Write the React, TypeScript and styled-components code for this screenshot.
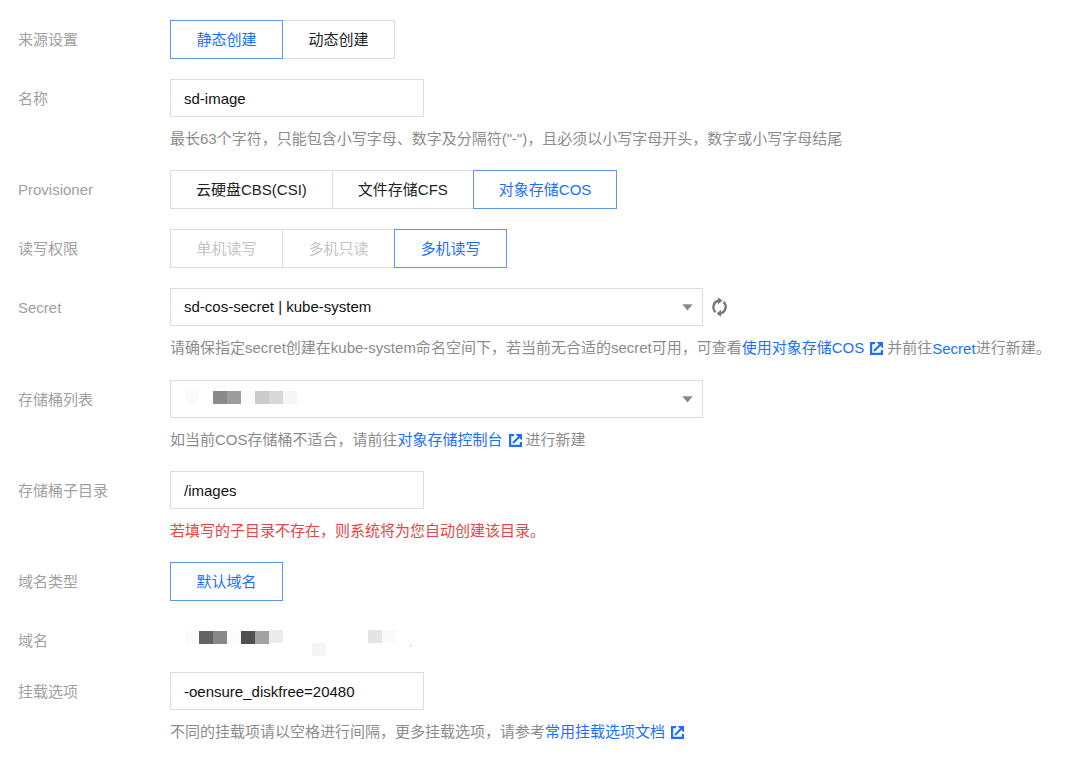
import React from 'react';
import styled, { createGlobalStyle } from 'styled-components';

const GlobalStyle = createGlobalStyle`
  *, *::before, *::after { box-sizing: border-box; }
  body {
    margin: 0;
    background: #fff;
    color: #111;
  }
  body, button, input, select {
    font-family: "Liberation Sans", "Noto Sans CJK SC", sans-serif;
    font-size: 15px;
    line-height: 20px;
  }
`;

const Form = styled.form`
  display: flex;
  flex-direction: column;
  gap: 21px;
  padding: 20px 16px 36px 18px;
`;

const Row = styled.div`
  display: grid;
  grid-template-columns: 152px minmax(0, 1fr);
`;

const Label = styled.label`
  padding-top: 10px;
  color: #a0a0a0;
`;

const Hint = styled.p<{ $error?: boolean }>`
  margin: 0;
  padding-top: 12px;
  color: ${(p) => (p.$error ? '#e54545' : '#8c8c8c')};
`;

const Segments = styled.div`
  display: flex;
`;

const Segment = styled.button<{ $active?: boolean }>`
  position: relative;
  z-index: ${(p) => (p.$active ? 1 : 0)};
  height: 39px;
  min-width: 113px;
  margin: 0 0 -1px;
  padding: 0 25px;
  border: 1px solid ${(p) => (p.$active ? '#5c97ea' : '#ddd')};
  background: #fff;
  color: ${(p) => (p.$active ? '#1a6fff' : '#222')};
  cursor: pointer;

  & + & { margin-left: -1px; }

  &:disabled {
    color: #c4c4c4;
    cursor: not-allowed;
  }
`;

const TextInput = styled.input`
  display: block;
  width: 254px;
  max-width: 100%;
  height: 38px;
  padding: 0 13px;
  border: 1px solid #ddd;
  border-radius: 0;
  background: #fff;
  color: #111;
`;

const SelectLine = styled.div`
  display: flex;
  align-items: center;
  gap: 8px;
`;

const SelectBox = styled.div`
  position: relative;
  flex: 0 1 533px;
`;

const Select = styled.select`
  display: block;
  width: 100%;
  height: 38px;
  padding: 0 32px 0 13px;
  border: 1px solid #ddd;
  border-radius: 0;
  appearance: none;
  background: #fff;
  color: #111;
`;

const Caret = styled.svg`
  position: absolute;
  top: 16px;
  right: 10px;
  pointer-events: none;
`;

const MaskOverlay = styled.div`
  position: absolute;
  top: 10px;
  left: 14px;
  display: flex;
  pointer-events: none;
`;

const IconButton = styled.button`
  display: flex;
  padding: 0;
  border: 0;
  background: none;
  color: #777;
  cursor: pointer;
`;

const Link = styled.a`
  color: #1a6fff;
  text-decoration: none;
`;

const ResourceLink = styled(Link)`
  display: inline-block;
  vertical-align: middle;
`;

const ExternalSvg = styled.svg`
  margin: 0 4px 0 6px;
  vertical-align: -2px;
`;

const DomainValue = styled.div`
  height: 30px;
  padding: 8px 0 0 14px;
  line-height: 0;
`;

const ExternalIcon = () => (
  <ExternalSvg width="13" height="13" viewBox="0 0 13 13" fill="none" stroke="#1a6fff" strokeWidth="2.2" aria-hidden="true">
    <path d="M5 1.1H1.1V11.9H11.9V8" />
    <path d="M4 9L10 3" />
    <path d="M6.4 0H13V6.6Z" fill="#1a6fff" stroke="none" />
  </ExternalSvg>
);

const CaretIcon = () => (
  <Caret width="11" height="7" viewBox="0 0 11 7" aria-hidden="true">
    <path d="M0.3 0.2H10.7L5.5 6.6Z" fill="#888" />
  </Caret>
);

const RefreshIcon = () => (
  <svg width="17" height="20" viewBox="0 0 17 20" fill="none" aria-hidden="true">
    <path d="M4.6 15.2A6.7 6.7 0 0 1 7.4 3.7" stroke="currentColor" strokeWidth="2.3" />
    <path d="M12.4 4.8A6.7 6.7 0 0 1 9.6 16.3" stroke="currentColor" strokeWidth="2.3" />
    <path d="M7 0.3L11.4 3.6L7 7.2Z" fill="currentColor" />
    <path d="M10 12.8L5.6 16.4L10 19.7Z" fill="currentColor" />
  </svg>
);

type Block = { x: number; y: number; fill: string };

const bucketBlocks: Block[] = [
  { x: 1, y: 1, fill: '#fafafa' },
  { x: 29, y: 1, fill: '#8a8a8a' },
  { x: 43, y: 1, fill: '#9d9d9d' },
  { x: 57, y: 1, fill: '#fafafa' },
  { x: 71, y: 1, fill: '#cbcbcb' },
  { x: 85, y: 1, fill: '#d8d8d8' },
  { x: 99, y: 1, fill: '#f6f6f6' },
];

const domainBlocks: Block[] = [
  { x: 1, y: 2, fill: '#fbfbfb' },
  { x: 15, y: 2, fill: '#636363' },
  { x: 29, y: 2, fill: '#888' },
  { x: 43, y: 2, fill: '#fbfbfb' },
  { x: 57, y: 2, fill: '#505050' },
  { x: 71, y: 2, fill: '#a2a2a2' },
  { x: 85, y: 1, fill: '#ebebeb' },
  { x: 128, y: 14, fill: '#f5f5f5' },
  { x: 184, y: 1, fill: '#e4e4e4' },
  { x: 198, y: 1, fill: '#fafafa' },
];

const Mosaic = ({ blocks, width, height }: { blocks: Block[]; width: number; height: number }) => (
  <svg width={width} height={height} viewBox={`0 0 ${width} ${height}`} aria-hidden="true">
    {blocks.map((b) => (
      <rect key={b.x} x={b.x} y={b.y} width="14" height="13" fill={b.fill} />
    ))}
    {width > 200 && <rect x="226" y="16" width="2" height="1" fill="#ccc" />}
  </svg>
);

type Option = { text: string; active?: boolean; disabled?: boolean };

const SegmentRow = ({ label, options }: { label: string; options: Option[] }) => (
  <Row>
    <Label as="span">{label}</Label>
    <Segments role="group" aria-label={label}>
      {options.map((o) => (
        <Segment key={o.text} type="button" $active={o.active} disabled={o.disabled} aria-pressed={!!o.active}>
          {o.text}
        </Segment>
      ))}
    </Segments>
  </Row>
);

export default function App() {
  return (
    <>
      <GlobalStyle />
      <Form>
        <SegmentRow label="来源设置" options={[{ text: '静态创建', active: true }, { text: '动态创建' }]} />

        <Row>
          <Label htmlFor="name">名称</Label>
          <div>
            <TextInput id="name" type="text" defaultValue="sd-image" />
            <Hint>最长63个字符，只能包含小写字母、数字及分隔符("-")，且必须以小写字母开头，数字或小写字母结尾</Hint>
          </div>
        </Row>

        <SegmentRow
          label="Provisioner"
          options={[{ text: '云硬盘CBS(CSI)' }, { text: '文件存储CFS' }, { text: '对象存储COS', active: true }]}
        />

        <SegmentRow
          label="读写权限"
          options={[
            { text: '单机读写', disabled: true },
            { text: '多机只读', disabled: true },
            { text: '多机读写', active: true },
          ]}
        />

        <Row>
          <Label htmlFor="secret">Secret</Label>
          <div>
            <SelectLine>
              <SelectBox>
                <Select id="secret" defaultValue="sd">
                  <option value="sd">sd-cos-secret | kube-system</option>
                </Select>
                <CaretIcon />
              </SelectBox>
              <IconButton type="button" aria-label="刷新">
                <RefreshIcon />
              </IconButton>
            </SelectLine>
            <Hint>
              请确保指定secret创建在kube-system命名空间下，若当前无合适的secret可用，可查看
              <Link href="#cos">使用对象存储COS<ExternalIcon /></Link>
              并前往<ResourceLink href="#secret">Secret</ResourceLink>进行新建。
            </Hint>
          </div>
        </Row>

        <Row>
          <Label htmlFor="bucket">存储桶列表</Label>
          <div>
            <SelectLine>
              <SelectBox>
                <Select id="bucket" defaultValue="">
                  <option value="" />
                </Select>
                <MaskOverlay>
                  <Mosaic blocks={bucketBlocks} width={114} height={16} />
                </MaskOverlay>
                <CaretIcon />
              </SelectBox>
            </SelectLine>
            <Hint>
              如当前COS存储桶不适合，请前往
              <Link href="#console">对象存储控制台<ExternalIcon /></Link>
              进行新建
            </Hint>
          </div>
        </Row>

        <Row>
          <Label htmlFor="subdir">存储桶子目录</Label>
          <div>
            <TextInput id="subdir" type="text" defaultValue="/images" />
            <Hint $error>若填写的子目录不存在，则系统将为您自动创建该目录。</Hint>
          </div>
        </Row>

        <SegmentRow label="域名类型" options={[{ text: '默认域名', active: true }]} />

        <Row>
          <Label as="span">域名</Label>
          <DomainValue>
            <Mosaic blocks={domainBlocks} width={240} height={28} />
          </DomainValue>
        </Row>

        <Row>
          <Label htmlFor="mount">挂载选项</Label>
          <div>
            <TextInput id="mount" type="text" defaultValue="-oensure_diskfree=20480" />
            <Hint>
              不同的挂载项请以空格进行间隔，更多挂载选项，请参考
              <Link href="#docs">常用挂载选项文档<ExternalIcon /></Link>
            </Hint>
          </div>
        </Row>
      </Form>
    </>
  );
}
